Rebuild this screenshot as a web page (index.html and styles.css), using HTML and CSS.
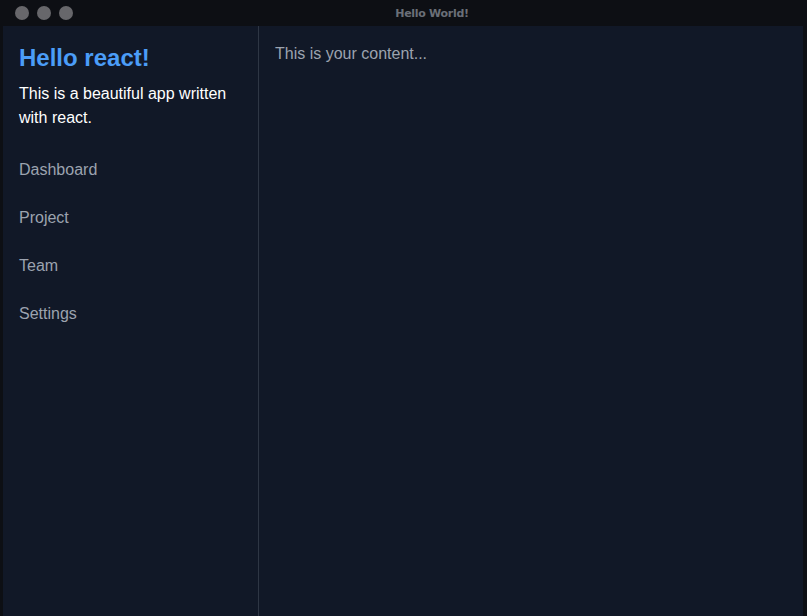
FILE: index.html
```html
<!DOCTYPE html>
<html>
<head>
<meta charset="utf-8">
<link rel="stylesheet" href="styles.css">
</head>
<body>
<div class="window">
  <div class="titlebar">
    <div class="lights">
      <span class="light"></span>
      <span class="light"></span>
      <span class="light"></span>
    </div>
    <div class="title">Hello World!</div>
  </div>
  <div class="frame">
    <aside class="sidebar">
      <h1 class="brand">Hello react!</h1>
      <p class="intro">This is a beautiful app written with react.</p>
      <nav class="nav">
        <a class="nav-item">Dashboard</a>
        <a class="nav-item">Project</a>
        <a class="nav-item">Team</a>
        <a class="nav-item">Settings</a>
      </nav>
    </aside>
    <main class="content">
      <p class="placeholder">This is your content...</p>
    </main>
  </div>
</div>
</body>
</html>
```

FILE: styles.css
```css
html, body {
  margin: 0;
  padding: 0;
  width: 807px;
  height: 616px;
  overflow: hidden;
  background: #0d0f14;
}
.window {
  display: flex;
  flex-direction: column;
  height: 616px;
  font-family: "Liberation Sans", Arial, sans-serif;
}
.titlebar {
  height: 26px;
  flex: none;
  display: flex;
  align-items: center;
  background: #0d0f14;
}
.lights {
  display: flex;
  gap: 8px;
  padding-left: 15px;
}
.light {
  width: 14px;
  height: 14px;
  border-radius: 50%;
  background: #67676b;
}
.title {
  flex: 1;
  text-align: center;
  padding-right: 16px;
  font-family: "DejaVu Sans", sans-serif;
  font-weight: bold;
  font-size: 11px;
  color: #6b6f78;
  letter-spacing: -0.3px;
}
.frame {
  flex: 1;
  display: flex;
  margin: 0 4px 0 3px;
  background: #111827;
}
.sidebar {
  flex: none;
  width: 256px;
  border-right: 1px solid #2e3644;
  padding: 16px 16px 0 16px;
  box-sizing: border-box;
}
.brand {
  margin: 0 0 8px 0;
  font-size: 24px;
  line-height: 32px;
  font-weight: bold;
  color: #4b9df8;
}
.intro {
  margin: 0;
  font-size: 16px;
  line-height: 24px;
  color: #ffffff;
}
.nav {
  display: flex;
  flex-direction: column;
  margin-top: 16px;
}
.nav-item {
  padding: 12px 0;
  font-size: 16px;
  line-height: 24px;
  color: #9ca3af;
}
.content {
  flex: 1;
  padding: 16px;
}
.placeholder {
  margin: 0;
  font-size: 16px;
  line-height: 24px;
  color: #9ca3af;
}
```
